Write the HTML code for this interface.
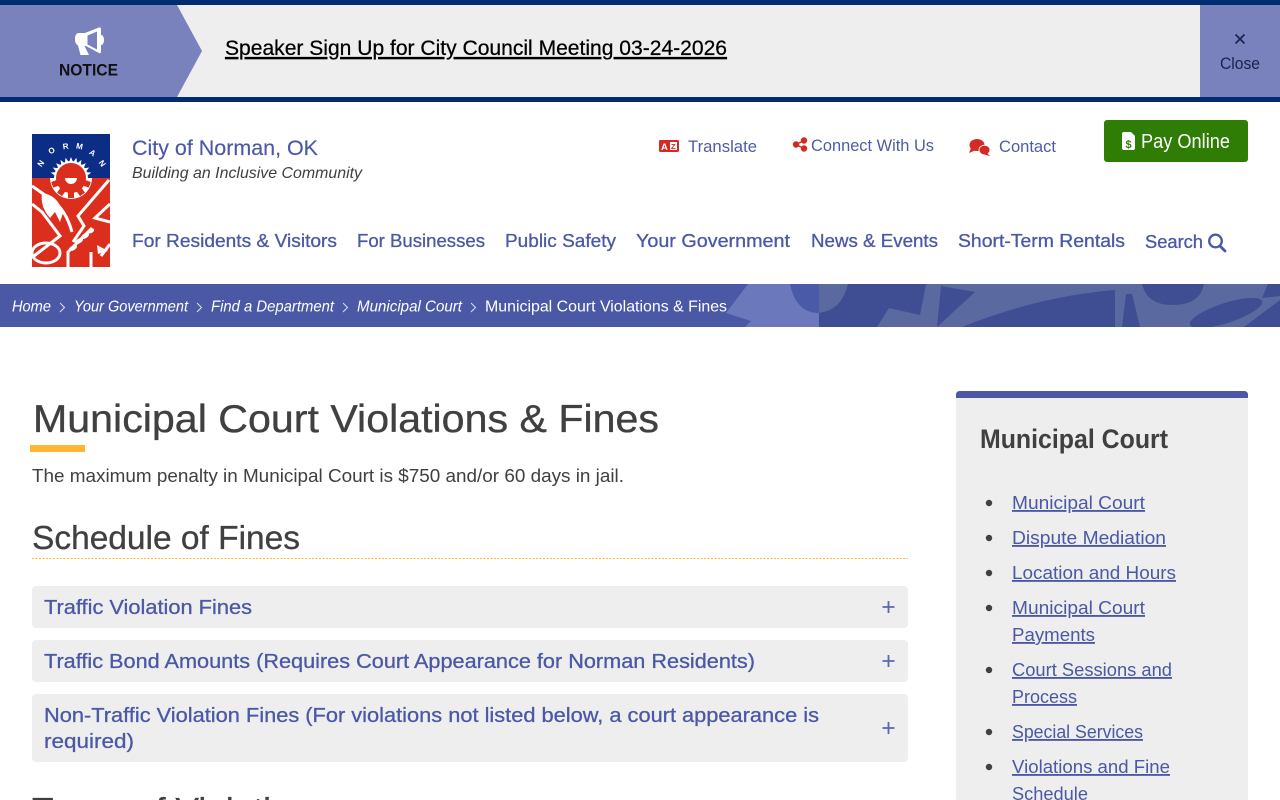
<!DOCTYPE html>
<html lang="en"><head><meta charset="utf-8"><title>Municipal Court Violations &amp; Fines</title>
<style>
html,body{margin:0;padding:0;background:#fff;width:1280px;height:800px;overflow:hidden}
svg{display:block}
text{font-family:"Liberation Sans",sans-serif;white-space:pre}
.nav{font-size:18.5px;fill:#4a58a6;stroke:#4a58a6;stroke-width:.3}
.acc{font-size:20.5px;fill:#4a58a6;stroke:#4a58a6;stroke-width:.3}
.bc{font-size:16px;font-style:italic;fill:#fff}
.top{font-size:16.5px;fill:#4f5ca5}
.li{font-size:18.5px;fill:#4a58a6;text-decoration:underline}
.dk{fill:#404040}
</style></head><body>
<svg width="1280" height="800" viewBox="0 0 1280 800" xmlns="http://www.w3.org/2000/svg">
<defs>
<polygon id="spk" points="71,157 67.500,166 74.500,166" fill="#fff"/>
<rect id="tth" x="68" y="192" width="6" height="6" fill="#dc2e1c"/>
<clipPath id="band"><rect x="0" y="284" width="1280" height="43"/></clipPath>
<clipPath id="logo"><rect x="32" y="134" width="78" height="133"/></clipPath>
</defs>
<!-- notice bar -->
<rect x="0" y="0" width="1280" height="102" fill="#eeeeee"/>
<polygon points="0,5 177,5 202,51 177,97 0,97" fill="#7a82be"/>
<rect x="1200" y="5" width="80" height="92" fill="#7a82be"/>
<rect x="0" y="0" width="1280" height="5" fill="#002d72"/>
<rect x="0" y="97" width="1280" height="5" fill="#002d72"/>
<path d="M79 33H85L99 27.500Q101 27 101 29V35H102Q104 37 104 40Q104 43 102 45H101V51Q101 54 99 53L86 46H84.500L89 55H80.500L78 45.500Q75 44 75 39Q75 33 79 33Z" fill="#fff"/>
<path d="M87.500 35.500L97 31.500V49.500L87.500 44.500Z" fill="#7a82be"/>
<text x="59" y="75.500" font-size="17" font-weight="700" fill="#111" textLength="59" lengthAdjust="spacingAndGlyphs">NOTICE</text>
<text x="225" y="55" font-size="21.500" fill="#000" stroke="#000" stroke-width=".25" text-decoration="underline" textLength="502" lengthAdjust="spacingAndGlyphs">Speaker Sign Up for City Council Meeting 03-24-2026</text>
<path d="M1235.500 34.500L1244.500 43.500M1244.500 34.500L1235.500 43.500" stroke="#1b2150" stroke-width="1.700" fill="none"/>
<text x="1220" y="69" font-size="17" fill="#1b2150" textLength="40" lengthAdjust="spacingAndGlyphs">Close</text>

<!-- logo -->
<g clip-path="url(#logo)">
<rect x="32" y="134" width="78" height="44" fill="#0b2d86"/>
<rect x="32" y="178" width="78" height="89" fill="#dc2e1c"/>
<use href="#spk" transform="rotate(-75 71 178)"/><use href="#spk" transform="rotate(-60 71 178)"/><use href="#spk" transform="rotate(-45 71 178)"/><use href="#spk" transform="rotate(-30 71 178)"/><use href="#spk" transform="rotate(-15 71 178)"/><use href="#spk"/><use href="#spk" transform="rotate(15 71 178)"/><use href="#spk" transform="rotate(30 71 178)"/><use href="#spk" transform="rotate(45 71 178)"/><use href="#spk" transform="rotate(60 71 178)"/><use href="#spk" transform="rotate(75 71 178)"/>
<path d="M54 178A17 17 0 0 1 88 178Z" fill="#fff"/>
<path d="M65 178A6 6 0 0 1 77 178Z" fill="#0b2d86"/>
<g font-size="8" font-weight="700" fill="#fff" text-anchor="middle">
<text x="43" y="165" transform="rotate(-55 43 165)">N</text><text x="53" y="153" transform="rotate(-30 53 153)">O</text><text x="66" y="149" transform="rotate(-8 66 149)">R</text><text x="79" y="149" transform="rotate(10 79 149)">M</text><text x="91" y="155" transform="rotate(35 91 155)">A</text><text x="100" y="165" transform="rotate(55 100 165)">N</text>
</g>
<path d="M50 178A21 21 0 0 0 92 178Z" fill="#fff"/>
<circle cx="71" cy="178" r="15" fill="#dc2e1c"/>
<use href="#tth"/><use href="#tth" transform="rotate(35 71 178)"/><use href="#tth" transform="rotate(-35 71 178)"/><use href="#tth" transform="rotate(70 71 178)"/><use href="#tth" transform="rotate(-70 71 178)"/>
<path d="M65 178A6 6 0 0 0 77 178Z" fill="#fff"/>
<g fill="none" stroke="#fff" stroke-width="3">
<path d="M32 186L52 200Q66 210 72 232"/>
<path d="M32 204L42 212L60 236L34 256"/>
<path d="M109 180L78 216L84 226L73 242"/>
<path d="M110 204L95 218L110 222"/>
<ellipse cx="46" cy="253" rx="14" ry="10"/>
<path d="M68 267V252L92 228"/>
<path d="M91 252V267M101 256L110 244"/>
</g>
<path d="M42 193Q58 195 63 213L60 222L55 212L50 218Q40 207 42 193Z" fill="#fff"/>
<path d="M97 245L108 251L98 254Z" fill="#fff"/>
<g fill="#fff"><ellipse cx="73" cy="248" rx="4.500" ry="2.300" transform="rotate(-30 73 248)"/><ellipse cx="79" cy="241" rx="4.500" ry="2.300" transform="rotate(-30 79 241)"/><ellipse cx="85" cy="236" rx="4.500" ry="2.300" transform="rotate(-30 85 236)"/><ellipse cx="91" cy="231" rx="3.500" ry="2" transform="rotate(-30 91 231)"/></g>
</g>

<!-- header -->
<text x="132" y="155" font-size="21.500" fill="#4a58a6" stroke="#4a58a6" stroke-width=".15" textLength="186" lengthAdjust="spacingAndGlyphs">City of Norman, OK</text>
<text x="132" y="178" font-size="16" font-style="italic" fill="#404040" textLength="230" lengthAdjust="spacingAndGlyphs">Building an Inclusive Community</text>

<rect x="659" y="140" width="20" height="12" rx="1.500" fill="#d42a24"/>
<text x="661" y="150" font-size="9.500" font-weight="700" fill="#fff">A</text>
<rect x="670" y="142" width="7" height="8" fill="#fff"/>
<text x="671" y="149" font-size="7.500" font-weight="700" fill="#d42a24">Z</text>
<text class="top" x="688" y="152" textLength="69" lengthAdjust="spacingAndGlyphs">Translate</text>
<g fill="#d42a24"><circle cx="796" cy="144.500" r="3.200"/><circle cx="804" cy="140.500" r="3.200"/><circle cx="804" cy="148.500" r="3.200"/></g>
<path d="M796 144.500L804 140.500M796 144.500L804 148.500" stroke="#d42a24" stroke-width="1.500"/>
<text class="top" x="811" y="151" textLength="123" lengthAdjust="spacingAndGlyphs">Connect With Us</text>
<ellipse cx="977" cy="145" rx="7.500" ry="6" fill="#d42a24"/><path d="M971 148L969 153L976 150Z" fill="#d42a24"/>
<ellipse cx="984.500" cy="150" rx="5.500" ry="4.800" fill="#d42a24" stroke="#fff" stroke-width=".8"/><path d="M987 153L990 156L984 154.500Z" fill="#d42a24"/>
<text class="top" x="999" y="152" textLength="57" lengthAdjust="spacingAndGlyphs">Contact</text>

<rect x="1104" y="120" width="144" height="42" rx="3" fill="#2f7d05"/>
<path d="M1124 132H1131L1135 136V148Q1135 150 1133 150H1124Q1122 150 1122 148V134Q1122 132 1124 132Z" fill="#fff"/>
<text x="1125.500" y="148" font-size="11" font-weight="700" fill="#2f7d05">$</text>
<text x="1141" y="148" font-size="20" fill="#fff" textLength="89" lengthAdjust="spacingAndGlyphs">Pay Online</text>

<!-- nav -->
<g>
<text class="nav" x="132" y="247" textLength="205" lengthAdjust="spacingAndGlyphs">For Residents &amp; Visitors</text>
<text class="nav" x="357" y="247" textLength="128" lengthAdjust="spacingAndGlyphs">For Businesses</text>
<text class="nav" x="505" y="247" textLength="111" lengthAdjust="spacingAndGlyphs">Public Safety</text>
<text class="nav" x="636" y="247" textLength="154" lengthAdjust="spacingAndGlyphs">Your Government</text>
<text class="nav" x="811" y="247" textLength="127" lengthAdjust="spacingAndGlyphs">News &amp; Events</text>
<text class="nav" x="958" y="247" textLength="167" lengthAdjust="spacingAndGlyphs">Short-Term Rentals</text>
<text class="nav" x="1145" y="248" textLength="58" lengthAdjust="spacingAndGlyphs">Search</text>
</g>
<circle cx="1215.500" cy="241" r="6.300" fill="none" stroke="#4a58a6" stroke-width="2.300"/>
<path d="M1220 246L1225 251" stroke="#4a58a6" stroke-width="2.800" stroke-linecap="round"/>

<!-- breadcrumb band -->
<g clip-path="url(#band)">
<rect x="0" y="284" width="1280" height="43" fill="#4a58a6"/>
<polygon points="748,284 819,284 819,327 745,327 751,321 726,313" fill="#6b78bb"/>
<path d="M790 284H819V313Q796 313 790 284Z" fill="#4a5aa8"/>
<rect x="819" y="284" width="461" height="43" fill="#3f4d92"/>
<path d="M819 284H848Q842 310 819 313Z" fill="#5a699f"/>
<polygon points="926,284 1280,284 1280,327 877,327 889,308 920,315" fill="#5a699f"/>
<polygon points="941,286 975,292 937,327" fill="#3f4d92"/>
<path d="M962 327Q1040 296 1115 290V327Z" fill="#3f4d92"/>
<polygon points="1126,294 1132,294 1140,327 1122,327" fill="#3f4d92"/>
<path d="M1142 284H1204Q1200 305 1172 305Q1147 305 1142 284Z" fill="#3f4d92"/>
<ellipse cx="1226" cy="313" rx="38" ry="10" transform="rotate(-18 1226 313)" fill="#3f4d92"/>
<polygon points="1244,327 1280,300 1280,327" fill="#3f4d92"/>
<polygon points="1268,284 1280,284 1280,296 1262,298" fill="#3f4d92"/>
</g>

<text class="bc" x="12" y="311.500" textLength="39" lengthAdjust="spacingAndGlyphs">Home</text>
<text class="bc" x="74" y="311.500" textLength="114" lengthAdjust="spacingAndGlyphs">Your Government</text>
<text class="bc" x="211" y="311.500" textLength="123" lengthAdjust="spacingAndGlyphs">Find a Department</text>
<text class="bc" x="357" y="311.500" textLength="105" lengthAdjust="spacingAndGlyphs">Municipal Court</text>
<text x="485" y="311.500" font-size="16" fill="#fff" textLength="242" lengthAdjust="spacingAndGlyphs">Municipal Court Violations &amp; Fines</text>
<g fill="none" stroke="#dfe2f2" stroke-width="1">
<path d="M60 303L64.500 307.500L60 312"/><path d="M197 303L201.500 307.500L197 312"/><path d="M343 303L347.500 307.500L343 312"/><path d="M471 303L475.500 307.500L471 312"/>
</g>

<!-- main -->
<text class="dk" x="33" y="432" font-size="39" stroke="#404040" stroke-width=".35" textLength="626" lengthAdjust="spacingAndGlyphs">Municipal Court Violations &amp; Fines</text>
<rect x="30" y="445" width="55" height="7" fill="#fdb62f"/>
<text class="dk" x="32" y="482" font-size="18.500" textLength="592" lengthAdjust="spacingAndGlyphs">The maximum penalty in Municipal Court is $750 and/or 60 days in jail.</text>
<text class="dk" x="32" y="549" font-size="33" stroke="#404040" stroke-width=".3" textLength="268" lengthAdjust="spacingAndGlyphs">Schedule of Fines</text>
<line x1="32" y1="558.500" x2="908" y2="558.500" stroke="#fdb62f" stroke-width="1" stroke-dasharray="2 1.500"/>

<rect x="32" y="586" width="876" height="42" rx="4" fill="#eeeeee"/>
<rect x="32" y="640" width="876" height="42" rx="4" fill="#eeeeee"/>
<rect x="32" y="694" width="876" height="68" rx="4" fill="#eeeeee"/>
<text class="acc" x="44" y="614" textLength="208" lengthAdjust="spacingAndGlyphs">Traffic Violation Fines</text>
<text class="acc" x="44" y="668" textLength="711" lengthAdjust="spacingAndGlyphs">Traffic Bond Amounts (Requires Court Appearance for Norman Residents)</text>
<text class="acc" x="44" y="722" textLength="775" lengthAdjust="spacingAndGlyphs">Non-Traffic Violation Fines (For violations not listed below, a court appearance is</text>
<text class="acc" x="44" y="748" textLength="90" lengthAdjust="spacingAndGlyphs">required)</text>
<g stroke="#5a68ae" stroke-width="1.800" fill="none">
<path d="M882.500 607H894.500M888.500 601V613"/><path d="M882.500 661H894.500M888.500 655V667"/><path d="M882.500 728H894.500M888.500 722V734"/>
</g>
<text class="dk" x="32" y="821" font-size="33" stroke="#404040" stroke-width=".3" textLength="296" lengthAdjust="spacingAndGlyphs">Types of Violations</text>

<!-- sidebar -->
<path d="M956 800V395Q956 391 960 391H1244Q1248 391 1248 395V800Z" fill="#eeeeee"/>
<path d="M956 398V395Q956 391 960 391H1244Q1248 391 1248 395V398Z" fill="#4a58a6"/>
<text class="dk" x="980" y="448" font-size="27" font-weight="700" textLength="188" lengthAdjust="spacingAndGlyphs">Municipal Court</text>
<g fill="#404040"><circle cx="989" cy="503" r="3.200"/><circle cx="989" cy="538" r="3.200"/><circle cx="989" cy="573" r="3.200"/><circle cx="989" cy="608" r="3.200"/><circle cx="989" cy="670" r="3.200"/><circle cx="989" cy="732" r="3.200"/><circle cx="989" cy="767" r="3.200"/></g>
<text class="li" x="1012" y="509" textLength="133" lengthAdjust="spacingAndGlyphs">Municipal Court</text>
<text class="li" x="1012" y="544" textLength="154" lengthAdjust="spacingAndGlyphs">Dispute Mediation</text>
<text class="li" x="1012" y="579" textLength="164" lengthAdjust="spacingAndGlyphs">Location and Hours</text>
<text class="li" x="1012" y="614" textLength="133" lengthAdjust="spacingAndGlyphs">Municipal Court</text>
<text class="li" x="1012" y="641" textLength="83" lengthAdjust="spacingAndGlyphs">Payments</text>
<text class="li" x="1012" y="676" textLength="160" lengthAdjust="spacingAndGlyphs">Court Sessions and</text>
<text class="li" x="1012" y="703" textLength="65" lengthAdjust="spacingAndGlyphs">Process</text>
<text class="li" x="1012" y="738" textLength="131" lengthAdjust="spacingAndGlyphs">Special Services</text>
<text class="li" x="1012" y="773" textLength="158" lengthAdjust="spacingAndGlyphs">Violations and Fine</text>
<text class="li" x="1012" y="800" textLength="76" lengthAdjust="spacingAndGlyphs">Schedule</text>
</svg>
</body></html>
